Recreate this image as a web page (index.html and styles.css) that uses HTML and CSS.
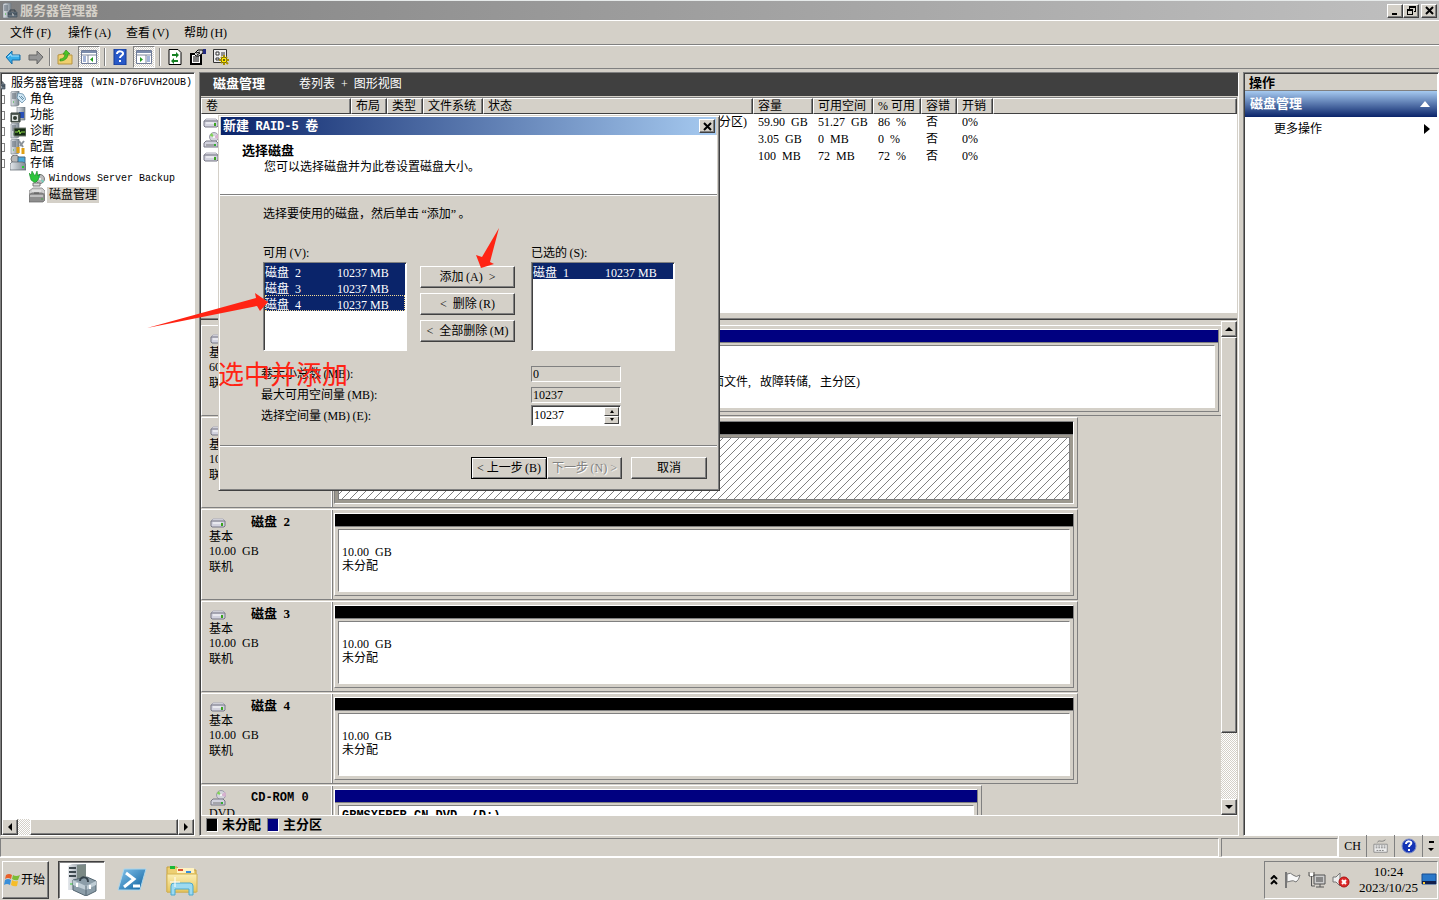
FILE: index.html
```html
<!DOCTYPE html>
<html lang="zh-CN">
<head>
<meta charset="utf-8">
<title>服务器管理器</title>
<link rel="stylesheet" href="styles.css">
</head>
<body>
<svg class="defs" aria-hidden="true">
  <defs>
    <linearGradient id="metal" x1="0" x2="1"><stop offset="0" stop-color="#e4e8ec"/><stop offset="1" stop-color="#7c8790"/></linearGradient>
    <linearGradient id="psblue" x1="0" y1="0" x2="1" y2="1"><stop offset="0" stop-color="#86c4ec"/><stop offset="1" stop-color="#0a5f9e"/></linearGradient>
    <linearGradient id="folder" x1="0" y1="0" x2="0" y2="1"><stop offset="0" stop-color="#fbeeb4"/><stop offset="1" stop-color="#e6c55c"/></linearGradient>
    <pattern id="hatch" width="8" height="8" patternUnits="userSpaceOnUse"><path d="M0 7h1v1H0zM1 6h1v1H1zM2 5h1v1H2zM3 4h1v1H3zM4 3h1v1H4zM5 2h1v1H5zM6 1h1v1H6zM7 0h1v1H7z" fill="#808080"/></pattern>
    <symbol id="tower" viewBox="0 0 16 16"><path d="M1 1l2-1h6v14l-2 1H1z" fill="url(#metal)" stroke="#6d777f" stroke-width=".6"/><path d="M2 3h4M2 5h4M2 7h4" stroke="#596570"/><path d="M3 11h1" stroke="#3b3"/></symbol>
    <symbol id="manager" viewBox="0 0 16 16"><use href="#tower"/><path d="M6 9h9v5H6z" fill="#64727e" stroke="#44515c" stroke-width=".7"/><path d="M8 9V7h5v2M6 11h9" stroke="#333f49" fill="none"/><path d="M10 11h1v2" stroke="#ddd"/></symbol>
    <symbol id="roles" viewBox="0 0 16 16"><use href="#tower"/><path d="M8 2l5 1 3 5-4 4-5-5z" fill="#cfe6f5" stroke="#58839e" stroke-width=".7"/><path d="M9 5l4 4M11 5l3 3" stroke="#6a93aa"/></symbol>
    <symbol id="features" viewBox="0 0 16 16"><path d="M7 0h8v13H7z" fill="url(#metal)" stroke="#68747e" stroke-width=".6"/><path d="M9 5h5v6H9z" fill="#2850b8"/><path d="M1 6h9v9H1z" fill="#59635d" stroke="#303a34"/><path d="M2 8h6v6H2z" fill="#dfe4e1"/><circle cx="5" cy="11" r="2" fill="#303a30"/></symbol>
    <symbol id="diag" viewBox="0 0 16 16"><use href="#tower"/><path d="M4 5h12v8H4z" fill="#142b13" stroke="#777f77"/><path d="M5 9h3l1-2 1 4 1-2h4" stroke="#8fdc4a" fill="none"/></symbol>
    <symbol id="config" viewBox="0 0 16 16"><use href="#tower"/><path d="M9 2l4 6M14 2l-4 5" stroke="#8b9299" stroke-width="2"/><path d="M8 8v6M13 9v6" stroke="#e0a013" stroke-width="3"/></symbol>
    <symbol id="storage" viewBox="0 0 16 16"><circle cx="5" cy="4" r="4" fill="#b8b8b8" stroke="#777"/><path d="M8 2h7v6H8z" fill="#49a9db" stroke="#4b6980"/><path d="M0 9l2-2h11l3 2v6H0z" fill="url(#metal)" stroke="#59636b" stroke-width=".7"/><path d="M12 12h2" stroke="#2c3" stroke-width="2"/></symbol>
    <symbol id="backup" viewBox="0 0 16 16"><circle cx="11" cy="8" r="4.500" fill="#bbb" stroke="#777"/><path d="M11 8l-3-3 3-1zM11 8l4 2-1 2z" fill="#6dd4bb"/><circle cx="11" cy="8" r="1" fill="#fff"/><path d="M0 2l2 2 1-4 3 5 2-5 1 5 2-2-2 6-3 3-4-3z" fill="#2cc53a" stroke="#087c1a" stroke-width=".5"/><path d="M4 12h7v3H4z" fill="#ddd" stroke="#777"/></symbol>
    <symbol id="drivegray" viewBox="0 0 16 16"><path d="M0 4l4-3h9l3 3v3H0z" fill="#cfcfcf" stroke="#777" stroke-width=".7"/><path d="M0 8l3-2h10l3 2v5l-2 2H0z" fill="#8e8e8e" stroke="#666" stroke-width=".7"/><path d="M1 9h13M3 4h9" stroke="#eee"/><path d="M5 6h5" stroke="#555"/><path d="M12 12h2" stroke="#4a4"/></symbol>
    <symbol id="disk" viewBox="0 0 16 10"><path d="M1 3l2-2h10l2 2z" fill="#f2f2f7" stroke="#aaaab8"/><path d="M1 3h14v5l-1 1H2L1 8z" fill="#d2d2de" stroke="#777784"/><path d="M3 5h8" stroke="#fff"/><path d="M12 5v3" stroke="#3aa31f" stroke-width="2"/></symbol>
    <symbol id="disc" viewBox="0 0 16 16"><circle cx="11" cy="5" r="4.500" fill="#d4d4dc" stroke="#9a9aa8"/><path d="M11 5L9 1a4 4 0 0 0-2 3z" fill="#7fd454"/><path d="M11 5l4 2a4 4 0 0 0 0-5z" fill="#d7b1cf"/><circle cx="11" cy="5" r="1" fill="#fff"/><path d="M1 11l2-2h10l2 2v4H1z" fill="#d2d2de" stroke="#777784"/><path d="M3 13h8" stroke="#777"/><path d="M12 12v2" stroke="#3a3" stroke-width="2"/></symbol>
  </defs>
</svg>
<div class="app">
  <header class="titlebar">
    <svg class="i16"><use href="#manager"/></svg>
    <h1>服务器管理器</h1>
    <div class="winbtns">
      <button aria-label="最小化"><svg viewBox="0 0 9 9"><path d="M1 7h5v2H1z"/></svg></button>
      <button aria-label="还原"><svg viewBox="0 0 9 9"><path d="M2 0h7v6H7V5h1V2H3v1H2zM0 3h6v6H0zM1 5v3h4V5z" fill-rule="evenodd"/></svg></button>
      <button class="gap" aria-label="关闭"><svg viewBox="0 0 9 9"><path d="M1 1l7 7M8 1L1 8" stroke="#000" stroke-width="2"/></svg></button>
    </div>
  </header>
  <nav class="menubar">
    <button>文件&thinsp;(F)</button><button>操作&thinsp;(A)</button><button>查看&thinsp;(V)</button><button>帮助&thinsp;(H)</button>
  </nav>
  <div class="toolbar">
    <button aria-label="后退"><svg class="i16" viewBox="0 0 16 16"><path d="M1 8l6-6v4h8v5H7v4z" fill="#39aee9" stroke="#156da8"/><path d="M3 8l3-3v2h8" stroke="#a8e2ff" fill="none"/></svg></button>
    <button aria-label="前进"><svg class="i16" viewBox="0 0 16 16"><path d="M15 8L9 2v4H1v5h8v4z" fill="#969696" stroke="#666"/></svg></button>
    <i class="sep"></i>
    <button aria-label="上一级"><svg class="i16" viewBox="0 0 16 16"><path d="M1 6l5-1 1 1h8v9H1z" fill="#efcf70" stroke="#b79440"/><path d="M3 10c3 0 5-2 5-5H6l3-4 4 4h-2c0 4-3 7-8 7z" fill="#4cc225" stroke="#268b12" stroke-width=".6"/></svg></button>
    <button class="on" aria-label="显示控制台树"><svg class="i16" viewBox="0 0 16 16"><path d="M.5 1.500h15v13H.5z" fill="#fff" stroke="#707c98"/><path d="M1 2h14v2H1z" fill="#7c8cac"/><path d="M1 6h14M7 6v9" stroke="#7e879c"/><path d="M2 8h3M2 10h3M2 12h3" stroke="#4a6ab0"/><path d="M12 8v5L9 10.500z" fill="#209a1c"/></svg></button>
    <i class="sep"></i>
    <button aria-label="帮助"><svg class="i16" viewBox="0 0 16 16"><path d="M2 0h12v16H2z" fill="#2859c8" stroke="#163b91"/><path d="M5 5c0-4 7-3 6 0-1 2-3 2-3 4" stroke="#fff" stroke-width="2" fill="none"/><path d="M7 11h2v2H7z" fill="#fff"/></svg></button>
    <button class="on" aria-label="显示操作窗格"><svg class="i16" viewBox="0 0 16 16"><path d="M.5 1.500h15v13H.5z" fill="#fff" stroke="#707c98"/><path d="M1 2h14v2H1z" fill="#7c8cac"/><path d="M1 6h14M10 6v9" stroke="#7e879c"/><path d="M11 8h3M11 10h3M11 12h3" stroke="#4a6ab0"/><path d="M4 8v5l3-2.500z" fill="#209a1c"/></svg></button>
    <i class="sep"></i>
    <button aria-label="刷新"><svg class="i16" viewBox="0 0 16 16"><path d="M2 .5h9l3 3v12H2z" fill="#fff" stroke="#000"/><path d="M5 7V5h4V3l3 3-3 3V7zM11 9v2H7v-2l-3 3 3 3v-2h4z" fill="#148022"/></svg></button>
    <button aria-label="属性"><svg class="i16" viewBox="0 0 16 16"><path d="M1 5h10v10H1z" fill="#fff" stroke="#000" stroke-width="2"/><path d="M3 8h6M3 10h6M3 12h6" stroke="#000"/><path d="M4 5l4-4h5v3L9 7H6z" fill="#ddd" stroke="#000"/><path d="M6 4l4-1M7 6l3-2" stroke="#000"/><path d="M13 0h3v5h-3z" fill="#222a80"/></svg></button>
    <button aria-label="设置"><svg class="i16" viewBox="0 0 16 16"><path d="M.5.5h13v13H.5z" fill="#eee" stroke="#333"/><path d="M3 3h3v3H3zM3 9h3v2H3z" fill="#fff" stroke="#333"/><path d="M8 4h4M8 6h4" stroke="#333"/><circle cx="11" cy="11" r="3" fill="#ffe800" stroke="#665b00"/><path d="M11 6v2M11 14v2M6 11h2M14 11h2M8 8l1 1M13 13l2 2M14 8l-1 1M8 14l1-1" stroke="#a89000" stroke-width="2"/><circle cx="11" cy="11" r="1" fill="#333"/></svg></button>
  </div>

  <main class="panes">
    <aside class="tree">
      <ul>
        <li class="root"><svg class="i16"><use href="#manager"/></svg><span>服务器管理器</span><span class="mono">(WIN-D76FUVH2OUB)</span></li>
        <li><i class="exp"></i><svg class="i16"><use href="#roles"/></svg><span>角色</span></li>
        <li><i class="exp"></i><svg class="i16"><use href="#features"/></svg><span>功能</span></li>
        <li><i class="exp"></i><svg class="i16"><use href="#diag"/></svg><span>诊断</span></li>
        <li><i class="exp"></i><svg class="i16"><use href="#config"/></svg><span>配置</span></li>
        <li><i class="exp"></i><svg class="i16"><use href="#storage"/></svg><span>存储</span></li>
        <li class="sub"><svg class="i16"><use href="#backup"/></svg><span class="mono">Windows Server Backup</span></li>
        <li class="sub"><svg class="i16"><use href="#drivegray"/></svg><span class="current">磁盘管理</span></li>
      </ul>
      <div class="hscroll">
        <button aria-label="向左滚动"><svg viewBox="0 0 8 8"><path d="M6 0v8L2 4z"/></svg></button><i class="thumb"></i><button aria-label="向右滚动"><svg viewBox="0 0 8 8"><path d="M2 0v8l4-4z"/></svg></button>
      </div>
    </aside>

    <section class="center">
      <div class="heading"><h2>磁盘管理</h2><span>卷列表&nbsp; +&nbsp; 图形视图</span></div>
      <div class="volumes">
        <table>
          <colgroup><col class="c-name"><col class="c-s"><col class="c-s"><col class="c-m"><col class="c-state"><col class="c-m"><col class="c-m"><col class="c-p"><col class="c-s"><col class="c-s"><col></colgroup>
          <thead><tr><th>卷</th><th>布局</th><th>类型</th><th>文件系统</th><th>状态</th><th>容量</th><th>可用空间</th><th>% 可用</th><th>容错</th><th>开销</th><th></th></tr></thead>
          <tbody>
            <tr><td class="ic"><svg class="i-disk"><use href="#disk"/></svg></td><td></td><td></td><td></td><td class="state">主分区)</td><td>59.90&nbsp; GB</td><td>51.27&nbsp; GB</td><td>86&nbsp; %</td><td>否</td><td>0%</td><td></td></tr>
            <tr><td class="ic"><svg class="i16"><use href="#disc"/></svg></td><td></td><td></td><td></td><td></td><td>3.05&nbsp; GB</td><td>0&nbsp; MB</td><td>0&nbsp; %</td><td>否</td><td>0%</td><td></td></tr>
            <tr><td class="ic"><svg class="i-disk"><use href="#disk"/></svg></td><td></td><td></td><td></td><td></td><td>100&nbsp; MB</td><td>72&nbsp; MB</td><td>72&nbsp; %</td><td>否</td><td>0%</td><td></td></tr>
          </tbody>
        </table>
      </div>
      <div class="graph">
        <div class="disks">
          <div class="disk full">
            <div class="label"><svg class="i-disk"><use href="#disk"/></svg><b></b><p>基本</p><p>60.00&nbsp; GB</p><p class="low">联机</p></div>
            <div class="parts"><div class="vol first primary"><i></i><div class="body"></div></div><div class="vol primary"><i></i><div class="body"><p></p><p>状态良好&nbsp; (启动,&nbsp;&nbsp; 页面文件,&nbsp;&nbsp; 故障转储,&nbsp;&nbsp; 主分区)</p></div></div></div>
          </div>
          <div class="disk">
            <div class="label"><svg class="i-disk"><use href="#disk"/></svg><b></b><p>基本</p><p>10.00&nbsp; GB</p><p class="low">联机</p></div>
            <div class="parts"><div class="vol picked"><i></i><div class="body"><svg><rect width="100%" height="100%" fill="url(#hatch)"/></svg></div></div></div>
          </div>
          <div class="disk">
            <div class="label"><svg class="i-disk"><use href="#disk"/></svg><b>磁盘&nbsp; 2</b><p>基本</p><p>10.00&nbsp; GB</p><p class="low">联机</p></div>
            <div class="parts"><div class="vol"><i></i><div class="body"><p>10.00&nbsp; GB</p><p>未分配</p></div></div></div>
          </div>
          <div class="disk">
            <div class="label"><svg class="i-disk"><use href="#disk"/></svg><b>磁盘&nbsp; 3</b><p>基本</p><p>10.00&nbsp; GB</p><p class="low">联机</p></div>
            <div class="parts"><div class="vol"><i></i><div class="body"><p>10.00&nbsp; GB</p><p>未分配</p></div></div></div>
          </div>
          <div class="disk">
            <div class="label"><svg class="i-disk"><use href="#disk"/></svg><b>磁盘&nbsp; 4</b><p>基本</p><p>10.00&nbsp; GB</p><p class="low">联机</p></div>
            <div class="parts"><div class="vol"><i></i><div class="body"><p>10.00&nbsp; GB</p><p>未分配</p></div></div></div>
          </div>
          <div class="disk cd">
            <div class="label"><svg class="i16"><use href="#disc"/></svg><b class="mono-b">CD-ROM 0</b><p>DVD</p></div>
            <div class="parts"><div class="vol primary"><i></i><div class="body"><b class="mono-b">GRMSXFRER_CN_DVD &nbsp;(D:)</b></div></div></div>
          </div>
        </div>
        <div class="vscroll">
          <button aria-label="向上滚动"><svg viewBox="0 0 8 8"><path d="M0 6h8L4 2z"/></svg></button><i class="thumb"></i><i class="rest"></i><button aria-label="向下滚动"><svg viewBox="0 0 8 8"><path d="M0 2h8L4 6z"/></svg></button>
        </div>
      </div>
      <div class="legend"><i class="un"></i><b>未分配</b><i class="pri"></i><b>主分区</b></div>
    </section>

    <aside class="actions">
      <h2>操作</h2>
      <div class="group"><b>磁盘管理</b><svg viewBox="0 0 10 6"><path d="M0 6h10L5 0z" fill="#fff"/></svg></div>
      <button class="more">更多操作<svg viewBox="0 0 6 10"><path d="M0 0v10l6-5z"/></svg></button>
    </aside>
  </main>

  <div class="status"><div class="s1"></div><div class="s2"></div>
    <div class="lang"><button>CH</button><button aria-label="键盘"><svg viewBox="0 0 18 16"><path d="M5 4c2-4 4 1 9-3" fill="none" stroke="#777"/><path d="M1 6h15v9H1z" fill="#eee" stroke="#888"/><path d="M3 8h11M3 10h11M4 13h8" stroke="#777" stroke-dasharray="2 1"/></svg></button><button aria-label="输入法帮助"><svg viewBox="0 0 16 16"><circle cx="8" cy="8" r="7" fill="#1333b5" stroke="#7c8dc8"/><path d="M5 6c0-4 7-3 5 0-1 1-2 1-2 3" stroke="#fff" stroke-width="2" fill="none"/><path d="M7 11h2v2H7z" fill="#fff"/></svg></button><button class="opt" aria-label="选项"><svg viewBox="0 0 6 10"><path d="M1 0h5v2H1zM0 7h6l-3 3z"/></svg></button></div>
  </div>
  <footer class="taskbar">
    <button class="start"><svg viewBox="0 0 16 16"><path d="M2 3q3-2 6 0L7 7Q4 5 1 7z" fill="#e9602a"/><path d="M9 3q3 2 7 0l-2 5q-3 1-6-1z" fill="#7cbc35"/><path d="M1 8q3-2 6 0l-1 5q-3-2-6 0z" fill="#3a8fd9"/><path d="M8 8q3 2 6 1l-1 5q-3 1-6-1z" fill="#f6bd29"/></svg>开始</button>
    <button class="task active" aria-label="服务器管理器"><svg viewBox="0 0 32 32"><path d="M2 2l4-2h14v24l-4 2H2z" fill="url(#metal)"/><path d="M11 1h9v20h-9z" fill="#7b8985"/><path d="M3 4h7M3 8h7M3 12h7" stroke="#3e484e" stroke-width="2"/><path d="M4 20h4" stroke="#3c3"/><path d="M7 16l14-3 9 4v10l-10 5-13-6z" fill="#8b9da8" stroke="#536570"/><path d="M7 16l13 6 10-5v4l-10 5-13-5z" fill="#bfcdd5"/><path d="M14 17c0-5 8-5 8 1" fill="none" stroke="#35434c" stroke-width="2"/><path d="M20 22v10" stroke="#536570"/><path d="M11 19v4M24 21v4" stroke="#fff" stroke-width="2"/></svg></button>
    <button class="task" aria-label="PowerShell"><svg viewBox="0 0 32 32"><path d="M8 5h22l-6 21H2z" fill="url(#psblue)" stroke="#acd7ed"/><path d="M10 9l8 6-10 8M17 22h7" fill="none" stroke="#fff" stroke-width="3"/></svg></button>
    <button class="task" aria-label="资源管理器"><svg viewBox="0 0 32 32"><path d="M1 3h10l2 3h17v22H1z" fill="#edcf72" stroke="#c6a13c"/><path d="M4 2h5v3H4z" fill="#18b836"/><path d="M11 4h17v5H11z" fill="#fff3c2"/><path d="M12 5h5v2h-5z" fill="#dc5535"/><path d="M20 7h5v2h-5z" fill="#368cdb"/><path d="M1 10h30v18H1z" fill="url(#folder)" stroke="#d4b455"/><path d="M5 31v-9q0-3 3-3h16q3 0 3 3v9h-4v-6H9v6z" fill="#9cdaf1" stroke="#4ba9cf"/><path d="M9 13v10M4 18h10" stroke="#fff"/></svg></button>
    <div class="tray">
      <button aria-label="显示隐藏的图标"><svg class="chev" viewBox="0 0 8 10"><path d="M1 4l3-3 3 3M1 9l3-3 3 3" fill="none" stroke="#000" stroke-width="2"/></svg></button>
      <svg class="i18" viewBox="0 0 18 18"><path d="M2 1v16" stroke="#777" stroke-width="2"/><path d="M3 3q4-2 6 1 3 3 7 0-1 5-4 7-3-2-5-1l-4 1z" fill="#f8f8f8" stroke="#777"/></svg>
      <svg class="i18" viewBox="0 0 18 18"><path d="M6 4h11v9H6z" fill="#ccc" stroke="#555"/><path d="M8 6h7v5H8z" fill="#888"/><path d="M8 16h8M12 13v3" stroke="#555"/><path d="M1 1v4h5V1M3.500 5v10H7" stroke="#555" fill="none"/><path d="M2 2h3v3H2z" fill="#fff"/></svg>
      <svg class="i18" viewBox="0 0 18 18"><path d="M1 6h3l4-4v13l-4-4H1z" fill="#eee" stroke="#777"/><circle cx="12" cy="11" r="5" fill="#dd2a2a" stroke="#a11"/><path d="M10 9l4 4M14 9l-4 4" stroke="#fff" stroke-width="2"/></svg>
      <time>10:24<br>2023/10/25</time>
      <svg class="show" viewBox="0 0 16 14"><path d="M1 1h14v10H1z" fill="#2a78c9" stroke="#164c91"/><path d="M1 8h14v3H1z" fill="#111f4c"/><path d="M2 9h2v2H2z" fill="#fc3"/></svg>
    </div>
  </footer>
</div>

<section class="dialog" role="dialog" aria-label="新建 RAID-5 卷">
  <div class="dlg-title"><b>新建&nbsp; <span class="mono-b">RAID-5</span>&nbsp; 卷</b><button aria-label="关闭"><svg viewBox="0 0 9 9"><path d="M1 1l7 7M8 1L1 8" stroke="#000" stroke-width="2"/></svg></button></div>
  <div class="dlg-head"><b>选择磁盘</b><p>您可以选择磁盘并为此卷设置磁盘大小。</p></div>
  <div class="dlg-body">
    <p>选择要使用的磁盘，然后单击&thinsp;“添加”&thinsp;。</p>
    <div class="pick">
      <label for="avail">可用&thinsp;(V):</label><span></span><label for="chosen">已选的&thinsp;(S):</label>
      <select id="avail" multiple size="4">
        <option selected>磁盘&nbsp; 2&nbsp;&nbsp;&nbsp;&nbsp;&nbsp;&nbsp;&nbsp;&nbsp;&nbsp;&nbsp;&nbsp;&nbsp;10237 MB</option>
        <option selected>磁盘&nbsp; 3&nbsp;&nbsp;&nbsp;&nbsp;&nbsp;&nbsp;&nbsp;&nbsp;&nbsp;&nbsp;&nbsp;&nbsp;10237 MB</option>
        <option selected class="focus">磁盘&nbsp; 4&nbsp;&nbsp;&nbsp;&nbsp;&nbsp;&nbsp;&nbsp;&nbsp;&nbsp;&nbsp;&nbsp;&nbsp;10237 MB</option>
      </select>
      <div class="moves"><button>添加&thinsp;(A)&nbsp; &gt;</button><button>&lt;&nbsp; 删除&thinsp;(R)</button><button>&lt;&nbsp; 全部删除&thinsp;(M)</button></div>
      <select id="chosen" multiple size="4">
        <option selected>磁盘&nbsp; 1&nbsp;&nbsp;&nbsp;&nbsp;&nbsp;&nbsp;&nbsp;&nbsp;&nbsp;&nbsp;&nbsp;&nbsp;10237 MB</option>
      </select>
    </div>
    <div class="fields">
      <label for="total">卷大小总数&thinsp;(MB):</label><input id="total" value="0" readonly>
      <label for="max">最大可用空间量&thinsp;(MB):</label><input id="max" value="10237" readonly>
      <label for="amount">选择空间量&thinsp;(MB)&thinsp;(E):</label>
      <div class="spin"><input id="amount" value="10237"><div><button aria-label="增加"><svg viewBox="0 0 4 3"><path d="M0 3h4L2 0z"/></svg></button><button aria-label="减少"><svg viewBox="0 0 4 3"><path d="M0 0h4L2 3z"/></svg></button></div></div>
    </div>
  </div>
  <div class="dlg-foot"><button class="default">&lt; 上一步&thinsp;(B)</button><button disabled>下一步&thinsp;(N) &gt;</button><button class="cancel">取消</button></div>
</section>
<svg class="marks" viewBox="0 0 400 120" aria-hidden="true"><path d="M0 100L109 70 108 65 121 74 113 83 110 78z" fill="#ff2414"/><path d="M352 0L335 29 329 27 334 40 347 36 343 34z" fill="#ff2414"/></svg>
<p class="note">选中并添加</p>
</body>
</html>
```
FILE: styles.css
```css
* { box-sizing: border-box; }
html, body { height: 100%; margin: 0; }
body { position: relative; overflow: hidden; background: #d4d0c8; color: #000; font: 12px/16px "Liberation Serif", "Noto Sans CJK SC", serif; }
p, h1, h2, ul { margin: 0; padding: 0; list-style: none; }
h1, h2, b { font-size: 13px; font-weight: 700; }
h1, h2 { line-height: 16px; }
button, input, select { font: inherit; color: inherit; margin: 0; padding: 0; border: 0; border-radius: 0; background: none; }
svg { display: block; flex: none; }
i { display: block; }
.defs { position: absolute; width: 0; height: 0; }
.i16 { width: 16px; height: 16px; }
.i18 { width: 18px; height: 18px; }
.i-disk { width: 16px; height: 10px; }
.mono { font-family: "Liberation Mono", monospace; font-size: 10px; }
.mono-b { font-family: "Liberation Mono", monospace; font-size: 12px; }
.app { display: flex; flex-direction: column; height: 100%; }

.titlebar { display: flex; align-items: center; gap: 2px; height: 20px; padding: 0 2px; border-top: 1px solid #e6eaea; background: linear-gradient(90deg, #808080, #c0c0c0); color: #d4d0c8; }
.winbtns { display: flex; margin-left: auto; }
.winbtns button, .dlg-title button { width: 16px; height: 14px; display: grid; place-items: center; background: #d4d0c8; border: 1px solid; border-color: #fff #404040 #404040 #fff; box-shadow: inset -1px -1px #808080; }
.winbtns svg, .dlg-title svg { width: 9px; height: 9px; }
.winbtns .gap { margin-left: 2px; }
.menubar { display: flex; gap: 17px; height: 25px; padding: 0 10px; border-top: 1px solid #fff; border-bottom: 1px solid #808080; }
.menubar button { width: 41px; text-align: left; white-space: nowrap; }
.toolbar { display: flex; align-items: center; height: 24px; padding: 0 1px; border-top: 1px solid #fff; border-bottom: 1px solid #808080; }
.toolbar button { width: 23px; height: 22px; display: grid; place-items: center; }
.toolbar .on { width: 22px; margin: 0 2px; background: conic-gradient(#fff 25%, #d4d0c8 0 50%, #fff 0 75%, #d4d0c8 0) 0 0/2px 2px; border: 1px solid; border-color: #808080 #fff #fff #808080; }
.sep { width: 2px; height: 18px; margin: 0 2px; border-left: 1px solid #808080; border-right: 1px solid #fff; }

.panes { flex: 1; min-height: 0; display: grid; grid-template-columns: 195px minmax(0, 1fr) 196px; gap: 4px; margin-top: 3px; padding-bottom: 2px; }
.tree, .center, .actions { border: 1px solid; border-color: #808080 #fff #fff #808080; box-shadow: inset 1px 1px #404040; min-height: 0; }
.tree { background: #fff; display: flex; flex-direction: column; overflow: hidden; padding: 1px 0 0 1px; }
.tree li { display: flex; height: 16px; align-items: center; gap: 4px; white-space: nowrap; }
.tree ul { flex: 1; padding-top: 1px; }
.tree .root .i16 { margin-left: -12px; }
.tree .root { gap: 5px; }
.tree .root .mono { margin-left: 2px; }
.exp { width: 3px; height: 9px; margin-right: 1px; border: 1px solid #808080; border-left: 0; }
.tree .sub { padding-left: 27px; gap: 2px; }
.tree .sub .mono { padding-left: 2px; }
.current { background: #d4d0c8; padding: 0 2px; }
.hscroll { display: flex; height: 16px; background: conic-gradient(#fff 25%, #d4d0c8 0 50%, #fff 0 75%, #d4d0c8 0) 0 0/2px 2px; }
.hscroll .thumb { flex: 1; margin-left: 12px; }
.hscroll button, .vscroll button, .thumb { background: #d4d0c8; border: 1px solid; border-color: #fff #404040 #404040 #fff; box-shadow: inset -1px -1px #808080; }
.hscroll button, .vscroll button { width: 16px; height: 16px; flex: none; display: grid; place-items: center; }
.hscroll svg, .vscroll svg { width: 8px; height: 8px; }

.center { display: flex; flex-direction: column; padding: 0 1px; }
.heading { display: flex; gap: 34px; flex: none; height: 23px; margin: 0 -1px; padding: 3px 13px 0; background: #404040; color: #fff; }
.volumes { flex: none; height: 216px; margin-top: 1px; border-top: 1px solid #808080; background: #fff; overflow: hidden; }
table { width: 100%; table-layout: fixed; border-collapse: separate; border-spacing: 0; }
.c-name { width: 150px; } .c-s { width: 36px; } .c-m { width: 60px; } .c-state { width: 270px; } .c-p { width: 48px; }
th, td { padding: 0 0 0 4px; white-space: nowrap; text-align: left; font-weight: 400; overflow: hidden; }
th { height: 16px; line-height: 13px; background: #d4d0c8; border: 1px solid; border-color: #fff #404040 #404040 #fff; box-shadow: inset -1px 0 #808080; }
td { height: 17px; line-height: 17px; padding-left: 5px; }
td.ic { padding-left: 2px; }
td.state { text-align: right; padding-right: 6px; }

.graph { flex: 1; min-height: 0; display: flex; margin-top: 5px; border-top: 1px solid #808080; box-shadow: inset 0 1px #404040; padding-top: 2px; }
.disks { flex: 1; min-width: 0; overflow: hidden; padding-top: 4px; }
.disk { display: flex; width: calc(100% - 143px); height: 91px; margin-bottom: 1px; border: 1px solid; border-color: #fff #808080 #808080 #fff; }
.disk.full { width: 100%; border-right: 0; }
.disk.cd { width: calc(100% - 239px); }
.label { flex: none; width: 131px; padding: 4px 7px 0; border-right: 1px solid #808080; box-shadow: inset -1px 0 #fff; display: grid; grid-template-columns: 42px 1fr; grid-auto-rows: min-content; line-height: 14px; }
.label svg { margin: 4px 0 0 1px; }
.label .i16 { margin-top: 0; height: 16px; }
.label b { line-height: 16px; height: 16px; }
.label p { grid-column: 1 / -1; }
.label .low { margin-top: 2px; }
.parts { flex: 1; min-width: 0; display: flex; gap: 1px; padding: 3px 3px 3px 1px; }
.full .parts { padding-right: 2px; }
.vol { flex: 1; display: flex; flex-direction: column; min-width: 0; border: 1px solid; border-color: #fff #808080 #808080 #fff; }
.vol.first { flex: 0 0 263px; }
.vol i { flex: none; height: 13px; background: #000; border-bottom: 1px solid #808080; }
.vol.primary i { background: #000080; }
.vol .body { flex: 1; margin: 2px 3px 3px; border: 1px solid; border-color: #808080 #fff #fff #808080; background: #fff; padding: 15px 3px 0; line-height: 14px; }
.vol p { min-height: 14px; white-space: nowrap; }
.vol.picked { background: #9c988e; border-color: #808080 #fff #fff #808080; }
.picked .body { border-color: #808080; padding: 0; min-height: 0; }
.picked svg { width: 100%; height: 100%; shape-rendering: crispEdges; }
.cd .body { padding-top: 2px; white-space: nowrap; overflow: hidden; }
.vscroll { display: flex; flex-direction: column; width: 16px; }
.vscroll .thumb { flex: 396; }
.rest { flex: 66; background: conic-gradient(#fff 25%, #d4d0c8 0 50%, #fff 0 75%, #d4d0c8 0) 0 0/2px 2px; }
.legend { flex: none; display: flex; align-items: flex-start; gap: 4px; height: 20px; padding: 2px 0 0 5px; border-top: 1px solid #fff; }
.legend b { line-height: 13px; }
.legend i { width: 12px; height: 14px; border: 1px solid; border-color: #808080 #fff #fff #808080; background: #000; }
.legend .pri { background: #000080; margin-left: 2px; }

.actions { background: #fff; padding: 1px; }
.actions h2 { height: 17px; padding: 1px 4px 0; line-height: 15px; background: #d4d0c8; border-bottom: 1px solid #808080; }
.group { display: flex; align-items: center; justify-content: space-between; height: 26px; padding: 0 7px 0 5px; color: #fff; background: linear-gradient(#a6caf0, #0a246a); }
.group svg { width: 10px; height: 6px; }
.more { display: flex; justify-content: space-between; align-items: center; width: 100%; height: 24px; padding: 0 7px 0 29px; }
.more svg { width: 6px; height: 10px; }

.status { flex: none; display: flex; gap: 2px; height: 19px; }
.s1, .s2 { border: 1px solid; border-color: #808080 #fff #fff #808080; }
.s1 { flex: 1; }
.s2 { width: 117px; }
.lang { display: flex; margin: -3px 0 0 -2px; border-left: 1px solid #fff; }
.lang button { width: 28px; display: grid; place-items: center; border-right: 1px solid #808080; }
.lang .opt { width: 16px; border: 0; }
.lang svg { width: 16px; height: 16px; }
.lang .opt svg { width: 6px; height: 10px; }
.taskbar { flex: none; display: flex; align-items: center; height: 43px; padding: 2px 1px 0 2px; border-top: 1px solid #fff; }
.start { display: flex; align-items: center; gap: 1px; width: 47px; height: 38px; padding-left: 1px; border: 1px solid; border-color: #fff #404040 #404040 #fff; box-shadow: inset -1px -1px #808080; white-space: nowrap; }
.start svg { width: 16px; height: 16px; }
.task { width: 47px; height: 38px; margin-right: 3px; display: grid; place-items: center; }
.start + .task { margin-left: 9px; }
.task svg { width: 32px; height: 32px; }
.active { background: #fff; border: 1px solid; border-color: #404040 #fff #fff #404040; box-shadow: inset 1px 1px #808080; }
.tray { display: flex; align-items: center; gap: 6px; margin-left: auto; width: 174px; height: 38px; padding-left: 5px; border: 1px solid; border-color: #808080 #fff #fff #808080; }
.chev { width: 8px; height: 10px; }
.tray time { flex: 1; text-align: center; font-size: 13px; }
.tray .show { width: 16px; height: 14px; margin-left: -6px; }

.dialog { position: absolute; left: 218px; top: 115px; width: 502px; height: 376px; display: flex; flex-direction: column; background: #d4d0c8; padding: 1px 2px 2px 1px; border: 1px solid; border-color: #d4d0c8 #404040 #404040 #d4d0c8; box-shadow: inset 1px 1px #fff, inset -1px -1px #808080; }
.dlg-title { display: flex; justify-content: space-between; align-items: center; height: 18px; margin: 0 1px; padding: 0 1px 0 2px; background: linear-gradient(90deg, #0a246a, #a6caf0); color: #fff; flex: none; }
.dlg-head { flex: none; height: 60px; padding: 8px 22px; background: #fff; border-bottom: 1px solid #808080; }
.dlg-head b { display: block; }
.dlg-head p { padding-left: 22px; line-height: 16px; }
.dlg-body { flex: 1; padding: 10px 43px 0; border-top: 1px solid #fff; }
.pick { display: grid; grid-template-columns: 144px 95px 144px; column-gap: 13px; margin-top: 22px; }
.pick label:nth-of-type(2) { padding-left: 3px; }
.pick label { height: 18px; line-height: 18px; }
.pick select { width: 144px; height: 89px; padding: 0; overflow: hidden; background: #fff; border: 1px solid; border-color: #808080 #fff #fff #808080; box-shadow: inset 1px 1px #404040; outline: 0; }
#chosen { margin-left: 3px; }
.pick option { height: 16px; min-height: 16px; padding: 0; line-height: 12px; margin: 0 1px; }
.pick option:checked { color: #fff; background: linear-gradient(#0a246a, #0a246a); }
.pick .focus { outline: 1px dotted #f5db95; outline-offset: -1px; }
.moves { display: flex; flex-direction: column; gap: 5px; padding-top: 4px; }
.moves button, .dlg-foot button { height: 22px; border: 1px solid; border-color: #fff #404040 #404040 #fff; box-shadow: inset -1px -1px #808080; white-space: nowrap; }
.fields { display: grid; grid-template-columns: 270px 90px; grid-auto-rows: 21px; align-items: center; margin: 12px 0 0 -2px; }
.fields > input { height: 16px; width: 90px; padding: 0 1px; border: 1px solid; border-color: #808080 #fff #fff #808080; }
.spin { display: flex; height: 21px; width: 90px; background: #fff; border: 1px solid; border-color: #808080 #fff #fff #808080; box-shadow: inset 1px 1px #404040; padding: 1px; }
.spin input { flex: 1; min-width: 0; padding-left: 1px; height: 16px; }
.spin div { display: flex; flex-direction: column; width: 15px; }
.spin button { flex: 1; display: grid; place-items: center; background: #d4d0c8; border: 1px solid; border-color: #fff #404040 #404040 #fff; }
.spin svg { width: 4px; height: 3px; }
.dlg-foot { flex: none; display: flex; justify-content: flex-end; height: 43px; padding: 11px 10px 0 0; border-top: 1px solid #808080; box-shadow: inset 0 1px #fff; }
.dlg-foot button { width: 75px; }
.dlg-foot .default { width: 76px; border-color: #000; box-shadow: inset 1px 1px #fff, inset -1px -1px #808080; }
.dlg-foot button:disabled { color: #808080; text-shadow: 1px 1px #fff; }
.dlg-foot .cancel { margin-left: 9px; width: 76px; }
.marks { position: absolute; left: 147px; top: 228px; width: 400px; height: 120px; pointer-events: none; }
.note { position: absolute; left: 218px; top: 357px; font: 26px/32px "Noto Sans CJK SC", sans-serif; color: #ff2414; }
```
